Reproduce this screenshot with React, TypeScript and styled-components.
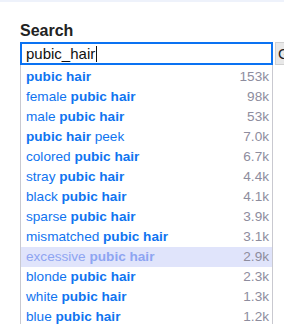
import { FC } from 'react'
import styled, { createGlobalStyle } from 'styled-components'

interface Suggestion {
  before?: string
  after?: string
  count: string
}

const suggestions: Suggestion[] = [
  { count: '153k' },
  { before: 'female', count: '98k' },
  { before: 'male', count: '53k' },
  { after: 'peek', count: '7.0k' },
  { before: 'colored', count: '6.7k' },
  { before: 'stray', count: '4.4k' },
  { before: 'black', count: '4.1k' },
  { before: 'sparse', count: '3.9k' },
  { before: 'mismatched', count: '3.1k' },
  { before: 'excessive', count: '2.9k' },
  { before: 'blonde', count: '2.3k' },
  { before: 'white', count: '1.3k' },
  { before: 'blue', count: '1.2k' },
]

const ACTIVE = 9

const App: FC = () => {
  return (
    <>
      <GlobalStyle />
      <TopBand />
      <Section>
        <Heading>Search</Heading>
        <SearchRow>
          <FakeInput>
            pubic_hair
            <Caret />
          </FakeInput>
          <GoButton>Go</GoButton>
        </SearchRow>
        <Dropdown>
          {suggestions.map((s, i) => (
            <Row key={i} $active={i === ACTIVE}>
              <Label>
                {s.before && `${s.before} `}
                <Match>pubic hair</Match>
                {s.after && ` ${s.after}`}
              </Label>
              <Count>{s.count}</Count>
            </Row>
          ))}
        </Dropdown>
      </Section>
    </>
  )
}

export default App

const GlobalStyle = createGlobalStyle`
  html, body {
    margin: 0;
    padding: 0;
    background: #ffffff;
    overflow: hidden;
    font-family: "Liberation Sans", Arial, sans-serif;
  }
`

const TopBand = styled.div`
  height: 2px;
  background: #eef2fb;
`

const Section = styled.div`
  padding-left: 20px;
`

const Heading = styled.div`
  margin-top: 19px;
  margin-bottom: 1px;
  height: 20px;
  line-height: 20px;
  font-size: 16px;
  font-weight: 700;
  color: #222;
`

const SearchRow = styled.div`
  display: flex;
  gap: 2px;
  white-space: nowrap;
`

const FakeInput = styled.div`
  flex-shrink: 0;
  box-sizing: border-box;
  width: 253px;
  height: 23px;
  border: 2px solid #0a72f2;
  padding-left: 4px;
  font-size: 15px;
  line-height: 19px;
  color: #111;
  display: flex;
  align-items: center;
`

const Caret = styled.span`
  display: inline-block;
  width: 1px;
  height: 16px;
  background: #111;
  margin-left: 1px;
`

const GoButton = styled.div`
  flex-shrink: 0;
  box-sizing: border-box;
  height: 23px;
  padding: 0 8px 0 2px;
  background: #e8e8e8;
  border: 1px solid #d0d0d0;
  font-size: 15px;
  line-height: 21px;
  color: #222;
`

const Dropdown = styled.div`
  box-sizing: border-box;
  width: 253px;
  padding-top: 2px;
  border-left: 1px solid #c9c9d0;
  border-right: 1px solid #c9c9d0;
  background: #fff;
`

const Row = styled.div<{ $active?: boolean }>`
  display: flex;
  justify-content: space-between;
  height: 20px;
  line-height: 20px;
  padding: 0 3px 0 5px;
  font-size: 13.6px;
  background: ${(p) => (p.$active ? '#e0e4fb' : 'transparent')};
  color: ${(p) => (p.$active ? '#8ea5f2' : '#0f74f0')};
`

const Label = styled.span`
  white-space: nowrap;
`

const Match = styled.b`
  font-weight: 700;
`

const Count = styled.span`
  color: #8e8d9e;
`
